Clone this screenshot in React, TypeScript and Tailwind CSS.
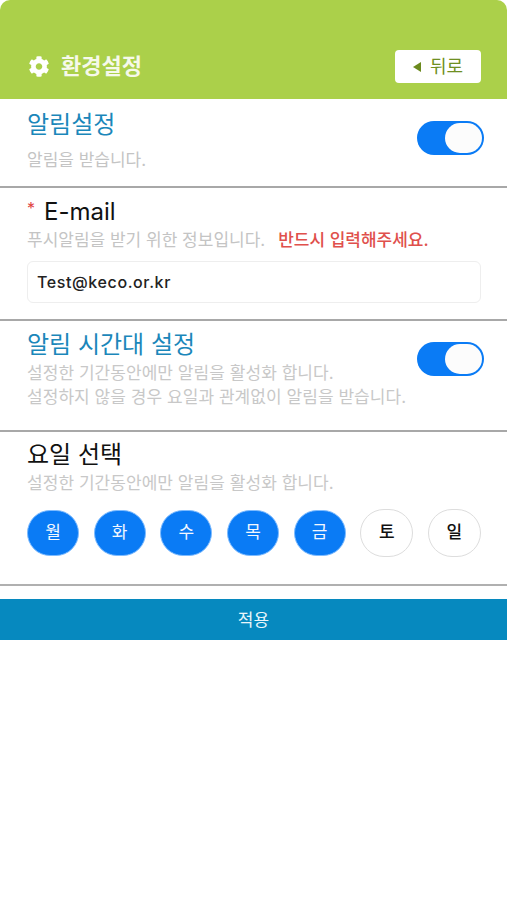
import { FaCog } from 'react-icons/fa'

const days = [
  { label: '월', on: true },
  { label: '화', on: true },
  { label: '수', on: true },
  { label: '목', on: true },
  { label: '금', on: true },
  { label: '토', on: false },
  { label: '일', on: false },
]

function Toggle() {
  return (
    <div className="flex h-[34px] w-[67px] items-center justify-end rounded-full bg-[#0a7bf5] pr-[2px]">
      <div className="h-[30px] w-[37px] rounded-full bg-[#fcfcfc]" />
    </div>
  )
}

export default function App() {
  return (
    <div className="h-[900px] w-[507px] bg-white font-['Inter','Noto_Sans_CJK_KR',sans-serif]">
      <header className="flex h-[99px] items-end justify-between rounded-t-[10px] bg-[#abd04a] pb-[16px] pl-[28px] pr-[26px]">
        <div className="flex items-center gap-[11px] pb-[3px]">
          <FaCog className="h-[21px] w-[22px] text-white" />
          <span className="text-[22px] leading-[28px] font-bold text-[#f6f9ea]">환경설정</span>
        </div>
        <button className="flex h-[33px] w-[86px] items-center justify-center gap-[9px] rounded-[4px] bg-white text-[18px] leading-none font-normal text-[#6f8f22]">
          <span className="h-0 w-0 border-y-[5px] border-r-[8px] border-y-transparent border-r-[#6b8a1e]" />
          뒤로
        </button>
      </header>

      <section className="flex h-[89px] items-start justify-between border-b-2 border-[#a8a8a8] pl-[27px] pr-[23px]">
        <div className="pt-[9px]">
          <h2 className="text-[24px] leading-[34px] text-[#1b87ba]">알림설정</h2>
          <p className="mt-[6px] text-[17px] leading-[24px] text-[#c4c4c4]">알림을 받습니다.</p>
        </div>
        <div className="pt-[22px]">
          <Toggle />
        </div>
      </section>

      <section className="h-[133px] border-b-2 border-[#a8a8a8] px-[26px] pt-[8px]">
        <h2 className="flex items-start text-[24px] leading-[32px] text-[#111111]">
          <span className="mr-[9px] ml-[1px] text-[16px] leading-[24px] text-[#e0433f]">*</span>
          E-mail
        </h2>
        <p className="ml-[1px] flex gap-[13px] text-[17px] leading-[24px] text-[#c4c4c4]">
          <span>푸시알림을 받기 위한 정보입니다.</span>
          <span className="font-medium text-[#e0504c]">반드시 입력해주세요.</span>
        </p>
        <input
          readOnly
          value="Test@keco.or.kr"
          className="mt-[9px] ml-px block h-[42px] w-[454px] rounded-[6px] border border-[#eeeeee] px-[9px] text-[16px] font-medium tracking-[0.6px] text-[#222222] outline-none"
        />
      </section>

      <section className="flex h-[111px] items-start justify-between border-b-2 border-[#a8a8a8] pl-[27px] pr-[23px]">
        <div className="pt-[7px]">
          <h2 className="text-[24px] leading-[33px] text-[#1b87ba]">알림 시간대 설정</h2>
          <p className="text-[17px] leading-[24px] tracking-[0.05px] text-[#c8c8c8]">
            설정한 기간동안에만 알림을 활성화 합니다.
            <br />
            설정하지 않을 경우 요일과 관계없이 알림을 받습니다.
          </p>
        </div>
        <div className="pt-[21px]">
          <Toggle />
        </div>
      </section>

      <section className="h-[154px] border-b-2 border-[#b0b0b0] pl-[27px] pr-[26px] pt-[6px]">
        <h2 className="text-[24px] leading-[33px] text-[#111111]">요일 선택</h2>
        <p className="text-[17px] leading-[24px] tracking-[0.05px] text-[#c8c8c8]">
          설정한 기간동안에만 알림을 활성화 합니다.
        </p>
        <div className="mt-[14px] flex items-center justify-between">
          {days.map((day) =>
            day.on ? (
              <div
                key={day.label}
                className="flex h-[46px] w-[52px] items-center justify-center rounded-full border border-[#7dbbff] bg-[#0a7bf5] text-[17px] text-[#f2f7ff]"
              >
                {day.label}
              </div>
            ) : (
              <div
                key={day.label}
                className="flex h-[48px] w-[53px] items-center justify-center rounded-full border border-[#dddddd] bg-white text-[17px] font-medium text-[#111111]"
              >
                {day.label}
              </div>
            ),
          )}
        </div>
      </section>

      <button className="mt-[13px] flex h-[41px] w-full items-center justify-center bg-[#0689bf] pt-[3px] text-[17px] text-[#eaf6fb]">
        적용
      </button>
    </div>
  )
}
